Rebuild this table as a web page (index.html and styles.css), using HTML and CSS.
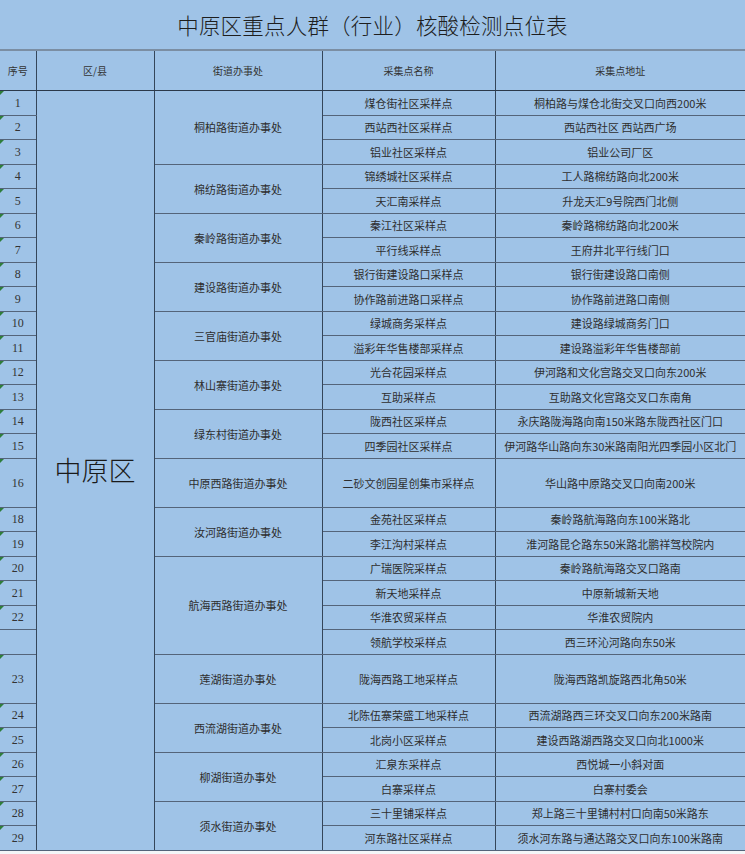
FILE: index.html
```html
<!DOCTYPE html>
<html lang="zh-CN">
<head>
<meta charset="utf-8">
<title>中原区重点人群（行业）核酸检测点位表</title>
<link rel="stylesheet" href="styles.css">
</head>
<body>
<div class="sheet">
  <h1 class="title">中原区重点人群（行业）核酸检测点位表</h1>
  <table class="grid">
    <colgroup>
      <col class="c-no"><col class="c-dist"><col class="c-street"><col class="c-name"><col class="c-addr">
    </colgroup>
    <thead>
      <tr class="head">
        <th>序号</th><th>区/县</th><th>街道办事处</th><th>采集点名称</th><th>采集点地址</th>
      </tr>
    </thead>
    <tbody>
      <tr><td class="no mark">1</td><td class="dist" rowspan="29">中原区</td><td class="street" rowspan="3">桐柏路街道办事处</td><td>煤仓街社区采样点</td><td class="addr">桐柏路与煤仓北街交叉口向西200米</td></tr>
      <tr><td class="no mark">2</td><td>西站西社区采样点</td><td class="addr">西站西社区&nbsp;西站西广场</td></tr>
      <tr><td class="no mark">3</td><td>铝业社区采样点</td><td class="addr">铝业公司厂区</td></tr>
      <tr><td class="no mark">4</td><td class="street" rowspan="2">棉纺路街道办事处</td><td>锦绣城社区采样点</td><td class="addr">工人路棉纺路向北200米</td></tr>
      <tr><td class="no mark">5</td><td>天汇南采样点</td><td class="addr">升龙天汇9号院西门北侧</td></tr>
      <tr><td class="no mark">6</td><td class="street" rowspan="2">秦岭路街道办事处</td><td>秦江社区采样点</td><td class="addr">秦岭路棉纺路向北200米</td></tr>
      <tr><td class="no mark">7</td><td>平行线采样点</td><td class="addr">王府井北平行线门口</td></tr>
      <tr><td class="no mark">8</td><td class="street" rowspan="2">建设路街道办事处</td><td>银行街建设路口采样点</td><td class="addr">银行街建设路口南侧</td></tr>
      <tr><td class="no mark">9</td><td>协作路前进路口采样点</td><td class="addr">协作路前进路口南侧</td></tr>
      <tr><td class="no mark">10</td><td class="street" rowspan="2">三官庙街道办事处</td><td>绿城商务采样点</td><td class="addr">建设路绿城商务门口</td></tr>
      <tr><td class="no mark">11</td><td>溢彩年华售楼部采样点</td><td class="addr">建设路溢彩年华售楼部前</td></tr>
      <tr><td class="no mark">12</td><td class="street" rowspan="2">林山寨街道办事处</td><td>光合花园采样点</td><td class="addr">伊河路和文化宫路交叉口向东200米</td></tr>
      <tr><td class="no mark">13</td><td>互助采样点</td><td class="addr">互助路文化宫路交叉口东南角</td></tr>
      <tr><td class="no mark">14</td><td class="street" rowspan="2">绿东村街道办事处</td><td>陇西社区采样点</td><td class="addr">永庆路陇海路向南150米路东陇西社区门口</td></tr>
      <tr><td class="no mark">15</td><td>四季园社区采样点</td><td class="addr">伊河路华山路向东30米路南阳光四季园小区北门</td></tr>
      <tr class="tall"><td class="no mark">16</td><td class="street">中原西路街道办事处</td><td>二砂文创园星创集市采样点</td><td class="addr">华山路中原路交叉口向南200米</td></tr>
      <tr><td class="no mark">18</td><td class="street" rowspan="2">汝河路街道办事处</td><td>金苑社区采样点</td><td class="addr">秦岭路航海路向东100米路北</td></tr>
      <tr><td class="no mark">19</td><td>李江沟村采样点</td><td class="addr">淮河路昆仑路东50米路北鹏祥驾校院内</td></tr>
      <tr><td class="no mark">20</td><td class="street" rowspan="4">航海西路街道办事处</td><td>广瑞医院采样点</td><td class="addr">秦岭路航海路交叉口路南</td></tr>
      <tr><td class="no mark">21</td><td>新天地采样点</td><td class="addr">中原新城新天地</td></tr>
      <tr><td class="no mark">22</td><td>华淮农贸采样点</td><td class="addr">华淮农贸院内</td></tr>
      <tr><td class="no"></td><td>领航学校采样点</td><td class="addr">西三环沁河路向东50米</td></tr>
      <tr class="tall"><td class="no mark">23</td><td class="street">莲湖街道办事处</td><td>陇海西路工地采样点</td><td class="addr">陇海西路凯旋路西北角50米</td></tr>
      <tr><td class="no mark">24</td><td class="street" rowspan="2">西流湖街道办事处</td><td>北陈伍寨荣盛工地采样点</td><td class="addr">西流湖路西三环交叉口向东200米路南</td></tr>
      <tr><td class="no mark">25</td><td>北岗小区采样点</td><td class="addr">建设西路湖西路交叉口向北1000米</td></tr>
      <tr><td class="no mark">26</td><td class="street" rowspan="2">柳湖街道办事处</td><td>汇泉东采样点</td><td class="addr">西悦城一小斜对面</td></tr>
      <tr><td class="no mark">27</td><td>白寨采样点</td><td class="addr">白寨村委会</td></tr>
      <tr><td class="no mark">28</td><td class="street" rowspan="2">须水街道办事处</td><td>三十里铺采样点</td><td class="addr">郑上路三十里铺村村口向南50米路东</td></tr>
      <tr><td class="no mark">29</td><td>河东路社区采样点</td><td class="addr">须水河东路与通达路交叉口向东100米路南</td></tr>
    </tbody>
  </table>
</div>
</body>
</html>
```

FILE: styles.css
```css
html, body {
  margin: 0;
  padding: 0;
  background: #f4f6f8;
}

.sheet {
  width: 745px;
  background: #9fc3e7;
  font-family: "Noto Sans CJK SC", "Noto Sans", sans-serif;
  color: #2a2a2a;
}

.title {
  margin: 0;
  height: 49px;
  line-height: 49px;
  text-align: center;
  font-size: 21.5px;
  font-weight: 300;
  color: #1e1e1e;
  letter-spacing: 0.2px;
}

.grid {
  width: 745px;
  border-collapse: collapse;
  table-layout: fixed;
  border-top: 2px solid #7b8ea3;
}

.c-no { width: 36px; }
.c-dist { width: 118px; }
.c-street { width: 168px; }
.c-name { width: 173px; }
.c-addr { width: 250px; }

.grid th,
.grid td {
  border: 1px solid #35465a;
  padding: 0;
  text-align: center;
  vertical-align: middle;
  font-size: 11px;
  font-weight: 400;
  white-space: nowrap;
  overflow: hidden;
  line-height: 14px;
  color: #2e2e2e;
}

.grid tr > :first-child { border-left: none; }
.grid tr > :last-child { border-right: none; }

.grid .head th {
  height: 39px;
  font-size: 10px;
  color: #333;
  border-bottom: 1px solid #2b394a;
}

.grid tbody tr { height: 24.5px; }
.grid tbody tr.tall { height: 49px; }

.grid td {
  border-top-color: #54647a;
  border-bottom-color: #54647a;
}

.grid td.no {
  position: relative;
  font-family: "Liberation Serif", "DejaVu Serif", serif;
  font-size: 12px;
  color: #333;
}

.mark::before {
  content: "";
  position: absolute;
  left: 0;
  top: 0;
  border-top: 4px solid #2e7d3a;
  border-right: 4px solid transparent;
}

.grid td.dist {
  font-size: 27px;
  font-weight: 300;
  line-height: 32px;
  color: #1a1a1a;
}
```
